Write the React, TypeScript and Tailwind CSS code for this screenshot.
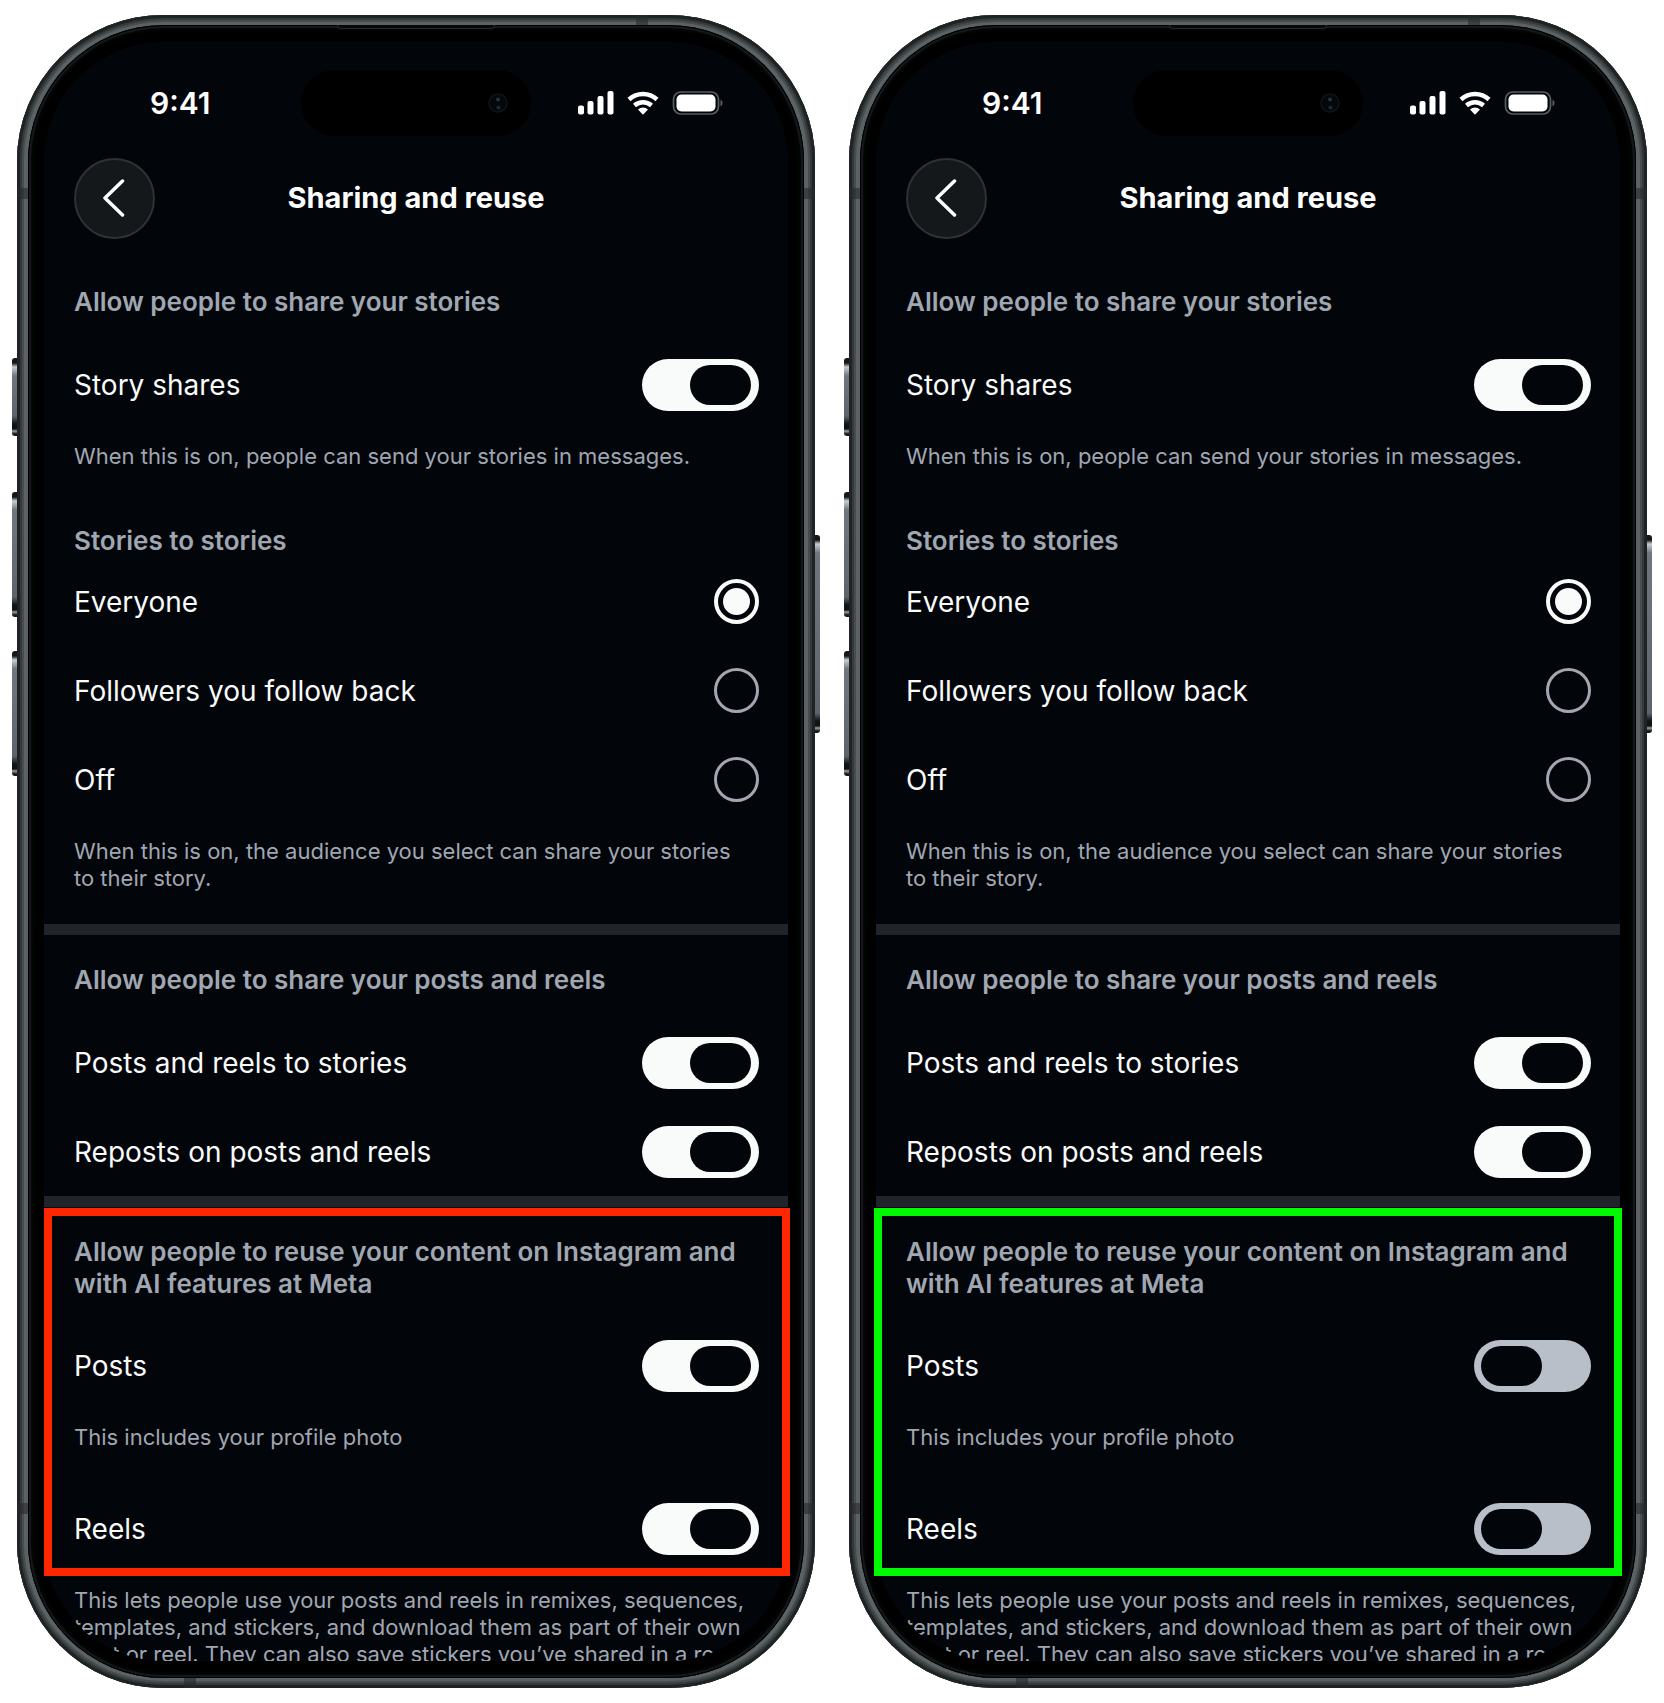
import { useId } from 'react';

type ToggleProps = { label: string; on: boolean };

function ToggleRow({ label, on }: ToggleProps) {
  const id = useId();
  return (
    <div className="flex h-[89px] items-center justify-between">
      <label htmlFor={id} className="text-[28px] leading-[36px] text-[#f9fafa]">{label}</label>
      <input
        id={id}
        type="checkbox"
        role="switch"
        defaultChecked={on}
        className="h-[52px] w-[117px] shrink-0 appearance-none rounded-full bg-[#b9bfc8] px-[7px] py-[6px] before:block before:h-[40px] before:w-[61px] before:rounded-full before:bg-[#02050a] checked:bg-[#f9fafa] checked:pr-[8px] checked:before:ml-auto"
      />
    </div>
  );
}

function RadioRow({ label, name, checked }: { label: string; name: string; checked?: boolean }) {
  const id = useId();
  return (
    <div className="flex h-[89px] items-center justify-between">
      <label htmlFor={id} className="text-[28px] leading-[36px] text-[#f9fafa]">{label}</label>
      <input
        id={id}
        type="radio"
        name={name}
        defaultChecked={checked}
        className="size-[45px] shrink-0 appearance-none rounded-full border-[3px] border-[#a0a7b1] p-[6px] checked:border-4 checked:border-[#f9fafa] checked:p-[5px] checked:before:block checked:before:size-[27px] checked:before:rounded-full checked:before:bg-[#f9fafa]"
      />
    </div>
  );
}

function Heading({ children }: { children: React.ReactNode }) {
  return <h2 className="text-[26px] leading-[32px] font-semibold text-[#a0a7b1]">{children}</h2>;
}

function Note({ children }: { children: React.ReactNode }) {
  return <p className="text-[22px] leading-[27px] text-[#a0a7b1]">{children}</p>;
}

function StatusBar() {
  return (
    <div className="grid h-[66px] grid-cols-[1fr_auto_1fr] items-center pr-[62px] pl-[106px]">
      <span className="text-[30px] leading-[36px] font-semibold text-white">9:41</span>
      <div className="-ml-[44px] h-[66px] w-[230px] rounded-full bg-black">
        <svg className="mt-[19px] ml-[183px] size-[28px]" viewBox="0 0 28 28">
          <circle cx="14" cy="14" r="9" fill="#04080b" stroke="#0e1518" strokeWidth="1.5" />
          <circle cx="14" cy="10.500" r="2" fill="#2a3338" />
          <circle cx="14.500" cy="18.500" r="2" fill="#20292e" />
        </svg>
      </div>
      <svg className="h-[26px] w-[148px] justify-self-end" viewBox="0 -1 148 26" fill="#fff">
        <rect x="0" y="14.500" width="6" height="9" rx="2" />
        <rect x="9.500" y="10" width="6" height="13.500" rx="2" />
        <rect x="19.500" y="5" width="6" height="18.500" rx="2" />
        <rect x="29.500" y="0" width="6" height="23.500" rx="2" />
        <g fill="none" stroke="#fff" strokeWidth="4.5">
          <path d="M51 8.5a20.5 20.5 0 0 1 28 0" />
          <path d="M56.500 14.5a13 13 0 0 1 17 0" />
        </g>
        <path d="M60 18.500a7.500 7.500 0 0 1 10 0l-5 5.200z" />
        <rect x="95.500" y="1" width="45" height="22" rx="7.500" fill="none" stroke="#5a5d60" strokeWidth="1.700" />
        <rect x="98.500" y="3.500" width="39" height="17" rx="5" />
        <path d="M142.500 8.500a4 4 0 0 1 0 7z" fill="#5a5d60" />
      </svg>
    </div>
  );
}

const keyFace =
  'absolute w-[6px] bg-[linear-gradient(to_bottom,#15181a_0,#15181a_5px,#c8ced1_9px,#6f777c_18px,#5d656b_calc(100%-20px),#101314_calc(100%-12px),#101314_calc(100%-7px),#9aa1a5_calc(100%-5px),#15181a_calc(100%-2px))]';

const bezel =
  'shadow-[inset_0_0_0_3px_#1f2324,inset_0_0_0_5px_#34393b,inset_0_0_0_7px_#474c4f]';

function Phone({ id, reuse, outline }: { id: string; reuse: boolean; outline: string }) {
  return (
    <div className="relative mx-[17px]">
      {/* side keys */}
      <div className={`${keyFace} top-[343px] -left-[5px] h-[78px] rounded-l-[3px]`} />
      <div className={`${keyFace} top-[477px] -left-[5px] h-[125px] rounded-l-[3px]`} />
      <div className={`${keyFace} top-[636px] -left-[5px] h-[125px] rounded-l-[3px]`} />
      <div className={`${keyFace} top-[520px] -right-[5px] h-[198px] rounded-r-[3px]`} />

      <div className={`relative rounded-[146px] bg-[#5c6164] px-[11px] py-[10px] ${bezel}`}>
        {/* antenna bands */}
        <div className="absolute top-0 right-[167px] h-[10px] w-[12px] bg-[#25292b]/60" />
        <div className="absolute bottom-0 left-[167px] h-[10px] w-[12px] bg-[#25292b]/60" />
        <div className="absolute inset-x-0 top-[173px] h-[11px] bg-[#25292b]/60" />
        <div className="absolute inset-x-0 bottom-[174px] h-[11px] bg-[#25292b]/60" />

        <div className="relative overflow-hidden rounded-[136px] bg-[#02050a] px-[16px] pt-[45px]">
          <StatusBar />

          <header className="grid h-[124px] grid-cols-[1fr_auto_1fr] items-center px-[30px]">
            <button
              type="button"
              aria-label="Back"
              className="flex size-[81px] items-center justify-center rounded-full border-2 border-[#2d3235] bg-[#14181b]"
            >
              <svg className="h-[40px] w-[24px]" viewBox="0 0 24 40" fill="none" stroke="#fff" strokeWidth="3.500" strokeLinecap="round" strokeLinejoin="round">
                <path d="M19.500 3 2 20l17.500 17" />
              </svg>
            </button>
            <h1 className="text-[29px] leading-[36px] font-bold text-white">Sharing and reuse</h1>
          </header>

          <section className="pt-[26px] pr-[29px] pb-[32px] pl-[30px]">
            <Heading>Allow people to share your stories</Heading>
            <div className="pt-[22px]">
              <ToggleRow label="Story shares" on />
            </div>
            <div className="pt-[14px] pb-[55px]">
              <Note>When this is on, people can send your stories in messages.</Note>
            </div>
            <Heading>Stories to stories</Heading>
            <RadioRow label="Everyone" name={`${id}-audience`} checked />
            <RadioRow label="Followers you follow back" name={`${id}-audience`} />
            <RadioRow label="Off" name={`${id}-audience`} />
            <div className="pt-[14px] pr-5">
              <Note>When this is on, the audience you select can share your stories to their story.</Note>
            </div>
          </section>

          <section className="border-t-[11px] border-[#20242b] pt-[29px] pr-[29px] pl-[30px]">
            <Heading>Allow people to share your posts and reels</Heading>
            <div className="pt-[22px]">
              <ToggleRow label="Posts and reels to stories" on />
              <ToggleRow label="Reposts on posts and reels" on />
            </div>
          </section>

          <section className="relative border-t-[11px] border-[#20242b] pt-[29px] pr-[29px] pl-[30px]">
            <Heading>Allow people to reuse your content on Instagram and with AI features at Meta</Heading>
            <div className="pt-[21px]">
              <ToggleRow label="Posts" on={reuse} />
            </div>
            <div className="pt-[14px] pb-[33px]">
              <Note>This includes your profile photo</Note>
            </div>
            <ToggleRow label="Reels" on={reuse} />
            <div className={`pointer-events-none absolute top-[1px] -right-[2px] -bottom-[3px] z-20 border-8 ${outline}`} />
          </section>

          <div className="px-[30px] pt-[14px] pb-[10px]">
            <Note>
              This lets people use your posts and reels in remixes, sequences, templates, and stickers, and download them as part of their own post or reel. They can also save stickers you’ve shared in a reel
            </Note>
          </div>

          {/* bezel over the screen corners */}
          <div className="pointer-events-none absolute inset-0 z-10 rounded-[136px] border-x-[16px] border-y-[17px] border-black" />
          <div className="pointer-events-none absolute inset-0 z-10 rounded-[136px] shadow-[inset_0_0_0_1px_#000,inset_0_0_0_3px_#14181a,inset_0_0_5px_3px_#0c0f11]" />
          <div className="absolute top-0 left-1/2 z-10 h-[4px] w-[158px] -translate-x-1/2 rounded-b-[4px] border border-t-0 border-[#25292b] bg-[#060809]" />
        </div>
      </div>
    </div>
  );
}

export default function App() {
  return (
    <main className="grid grid-cols-2 bg-white py-[15px] font-['Inter',sans-serif]">
      <Phone id="before" reuse outline="left-0 border-[#ff2600]" />
      <Phone id="after" reuse={false} outline="-left-[2px] border-[#00f900]" />
    </main>
  );
}
